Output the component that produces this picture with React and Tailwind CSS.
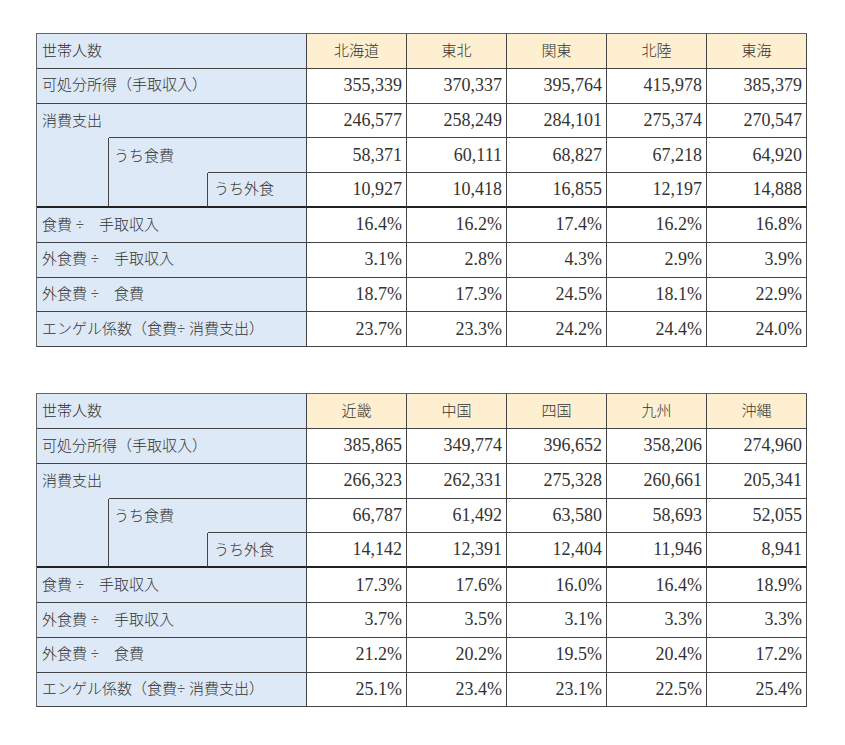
import React from "react";

const FONT = { fontFamily: '"Liberation Serif", "Noto Sans CJK JP", serif' };

const t1 = {
  heads: ["北海道", "東北", "関東", "北陸", "東海"],
  rows: [
    ["355,339", "370,337", "395,764", "415,978", "385,379"],
    ["246,577", "258,249", "284,101", "275,374", "270,547"],
    ["58,371", "60,111", "68,827", "67,218", "64,920"],
    ["10,927", "10,418", "16,855", "12,197", "14,888"],
    ["16.4%", "16.2%", "17.4%", "16.2%", "16.8%"],
    ["3.1%", "2.8%", "4.3%", "2.9%", "3.9%"],
    ["18.7%", "17.3%", "24.5%", "18.1%", "22.9%"],
    ["23.7%", "23.3%", "24.2%", "24.4%", "24.0%"],
  ],
};

const t2 = {
  heads: ["近畿", "中国", "四国", "九州", "沖縄"],
  rows: [
    ["385,865", "349,774", "396,652", "358,206", "274,960"],
    ["266,323", "262,331", "275,328", "260,661", "205,341"],
    ["66,787", "61,492", "63,580", "58,693", "52,055"],
    ["14,142", "12,391", "12,404", "11,946", "8,941"],
    ["17.3%", "17.6%", "16.0%", "16.4%", "18.9%"],
    ["3.7%", "3.5%", "3.1%", "3.3%", "3.3%"],
    ["21.2%", "20.2%", "19.5%", "20.4%", "17.2%"],
    ["25.1%", "23.4%", "23.1%", "22.5%", "25.4%"],
  ],
};

function Num({ v, thick }) {
  return (
    <div
      className={
        "flex items-center justify-end pr-[4px] bg-white text-[18px] text-[#333] border-r border-[#444] " +
        (thick ? "border-b-2 border-b-[#222]" : "border-b")
      }
    >
      {v}
    </div>
  );
}

function Label({ children }) {
  return (
    <div className="col-span-3 flex items-center pl-[5px] bg-[#dde9f6] text-[15px] text-[#333] border-r border-b border-[#444] whitespace-pre">
      {children}
    </div>
  );
}

function Table({ data }) {
  const { heads, rows } = data;
  return (
    <div
      className="grid grid-cols-[72px_99px_99px_100px_100px_100px_100px_100px] auto-rows-[34.8px] w-fit border-l border-t border-[#666] font-light"
      style={FONT}
    >
      {/* header */}
      <Label>世帯人数</Label>
      {heads.map((h) => (
        <div
          key={h}
          className="flex items-center justify-center bg-[#fdefcf] text-[15px] text-[#333] border-r border-b border-[#444]"
        >
          {h}
        </div>
      ))}

      {/* 可処分所得 */}
      <Label>可処分所得（手取収入）</Label>
      {rows[0].map((v, i) => (
        <Num key={i} v={v} />
      ))}

      {/* 消費支出 */}
      <div className="flex items-center pl-[5px] bg-[#dde9f6] text-[15px] text-[#333] whitespace-nowrap">
        消費支出
      </div>
      <div className="col-span-2 bg-[#dde9f6] border-r border-b border-[#444]" />
      {rows[1].map((v, i) => (
        <Num key={i} v={v} />
      ))}

      {/* うち食費 */}
      <div className="row-span-2 bg-[#dde9f6] border-r border-[#444] border-b-2 border-b-[#222]" />
      <div className="flex items-center pl-[5px] bg-[#dde9f6] text-[15px] text-[#333] whitespace-nowrap">
        うち食費
      </div>
      <div className="bg-[#dde9f6] border-r border-b border-[#444]" />
      {rows[2].map((v, i) => (
        <Num key={i} v={v} />
      ))}

      {/* うち外食 */}
      <div className="bg-[#dde9f6] border-r border-[#444] border-b-2 border-b-[#222]" />
      <div className="flex items-center pl-[6px] bg-[#dde9f6] text-[15px] text-[#333] border-r border-[#444] border-b-2 border-b-[#222] whitespace-nowrap">
        うち外食
      </div>
      {rows[3].map((v, i) => (
        <Num key={i} v={v} thick />
      ))}

      <Label>{"食費 ÷　手取収入"}</Label>
      {rows[4].map((v, i) => (
        <Num key={i} v={v} />
      ))}

      <Label>{"外食費 ÷　手取収入"}</Label>
      {rows[5].map((v, i) => (
        <Num key={i} v={v} />
      ))}

      <Label>{"外食費 ÷　食費"}</Label>
      {rows[6].map((v, i) => (
        <Num key={i} v={v} />
      ))}

      <Label>{"エンゲル係数（食費÷ 消費支出）"}</Label>
      {rows[7].map((v, i) => (
        <Num key={i} v={v} />
      ))}
    </div>
  );
}

export default function App() {
  return (
    <div className="w-[845px] h-[745px] bg-white pl-[36px] pt-[33px]">
      <Table data={t1} />
      <div className="h-[46px]" />
      <Table data={t2} />
    </div>
  );
}
